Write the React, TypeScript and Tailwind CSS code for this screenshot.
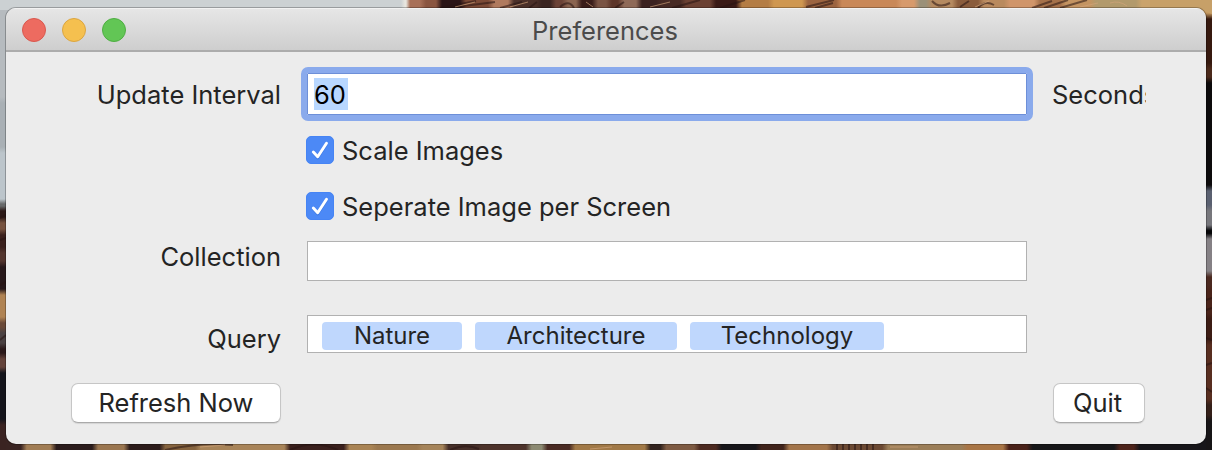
import React from "react";

type Band = [start: number, size: number, color: string];

const topBands: Band[] = [
  [0, 404, "#ccd1d3"], [404, 3, "#e8e6df"], [407, 16, "#a87058"], [423, 16, "#8a5540"],
  [439, 24, "#2a1517"], [463, 28, "#7c4a36"], [491, 20, "#b07a5e"], [511, 28, "#4b3029"],
  [539, 14, "#3a2420"], [553, 12, "#6b4236"], [565, 14, "#8a6450"], [579, 16, "#3a1d1a"],
  [595, 14, "#7a5444"], [609, 12, "#5d3529"], [621, 18, "#8f6a58"], [639, 20, "#3b2220"],
  [659, 24, "#472a24"], [683, 30, "#6b4133"], [713, 26, "#3a1a16"], [739, 32, "#b47d45"],
  [771, 34, "#cf9750"], [805, 34, "#9c6440"], [839, 60, "#c98858"], [899, 18, "#d79a6c"],
  [917, 12, "#9a9078"], [929, 26, "#b58a60"], [955, 26, "#8a5c3c"], [981, 26, "#b98a5e"],
  [1007, 30, "#d0956a"], [1037, 26, "#a5714a"], [1063, 30, "#c49462"], [1093, 46, "#b29a6c"],
  [1139, 73, "#caa36c"],
];

const bottomBands: Band[] = [
  [0, 18, "#3a2422"], [18, 30, "#a07c54"], [48, 42, "#2b1c1c"], [90, 32, "#9a7650"],
  [122, 36, "#2c1c1b"], [158, 36, "#86643f"], [194, 90, "#a88459"], [284, 60, "#3a201d"],
  [344, 28, "#a98455"], [372, 46, "#9b784f"], [418, 26, "#a5845a"], [444, 34, "#47302a"],
  [478, 50, "#4d332b"], [528, 16, "#8c8a72"], [544, 28, "#4a2b24"], [572, 76, "#a17947"],
  [648, 16, "#33241f"], [664, 34, "#7d5a42"], [698, 22, "#4c2a20"], [720, 40, "#17161a"],
  [760, 28, "#40231b"], [788, 44, "#a2744a"], [832, 56, "#6b4933"], [888, 80, "#9b7e58"],
  [968, 42, "#a87546"], [1010, 24, "#4a221a"], [1034, 88, "#171719"], [1122, 20, "#4d241b"],
  [1142, 70, "#17161a"],
];

const leftBands: Band[] = [
  [0, 100, "#b6bbbf"], [100, 50, "#a9b0b5"], [150, 52, "#bcc5cb"], [202, 6, "#67696a"],
  [208, 12, "#2b1917"], [220, 12, "#76523f"], [232, 18, "#3b211d"], [250, 14, "#53352e"],
  [264, 28, "#27181a"], [292, 28, "#b08353"], [320, 10, "#6a4938"], [330, 16, "#4a4142"],
  [346, 10, "#2b191a"], [356, 14, "#64433a"], [370, 52, "#14141b"], [422, 28, "#3a2321"],
];

const rightBands: Band[] = [
  [0, 16, "#c69a60"], [16, 50, "#36190f"], [66, 14, "#4b2a1b"], [80, 108, "#0d0b0c"],
  [188, 20, "#5a6070"], [208, 20, "#77777c"], [228, 8, "#060608"], [236, 38, "#858185"],
  [274, 14, "#4b2920"], [288, 28, "#4a241a"], [316, 26, "#3c1c14"], [342, 60, "#582e20"],
  [402, 16, "#342019"], [418, 32, "#171517"],
];

const streaks = [
  "M440 8L476 1M448 8L495 2M500 8L522 2M529 8l8-6M560 7q9-8 14 1M615 8l9-6M672 8l28-8M720 8l25-8",
  "M806 7l28-7M815 8l18-5M932 1q7 8 18 2M960 7l9-6M978 8q7-8 16-3M1032 8l20-7M1044 8l24-8M1060 8l27-8",
  "M165 450q35-8 68-5M290 450q24-11 48 0M450 450q15-7 29-1M0 218l6-3M0 240l6-2M0 285l6-3M0 340l6-5",
  "M837 444v6M843 444v6M849 444v6M855 444v6M861 444v6M867 444v6M873 444v6M1206 300l6-2M1206 310l6-2M1206 338l6 2M1206 365l6-2M1206 388l6 4",
];

function Stops({ bands, length }: { bands: Band[]; length: number }) {
  return (
    <>
      {bands.flatMap(([start, size, color]) => {
        const edge = Math.min(3, size / 3);
        return [
          <stop key={start + "a"} offset={(start + edge) / length} stopColor={color} />,
          <stop key={start + "b"} offset={(start + size - edge) / length} stopColor={color} />,
        ];
      })}
    </>
  );
}

function Wallpaper() {
  return (
    <svg className="absolute inset-0" width="1212" height="450" viewBox="0 0 1212 450" aria-hidden="true">
      <defs>
        <linearGradient id="top"><Stops bands={topBands} length={1212} /></linearGradient>
        <linearGradient id="bottom"><Stops bands={bottomBands} length={1212} /></linearGradient>
        <linearGradient id="left" x2="0" y2="1"><Stops bands={leftBands} length={450} /></linearGradient>
        <linearGradient id="right" x2="0" y2="1"><Stops bands={rightBands} length={450} /></linearGradient>
      </defs>
      <rect width="20" height="450" fill="url(#left)" />
      <rect x="1196" width="16" height="450" fill="url(#right)" />
      <rect width="1212" height="10" fill="url(#top)" />
      <path d="M1150 0h62v14l-15-6h-47z" fill="#c7a068" />
      <rect y="438" x="6" width="1200" height="12" fill="url(#bottom)" />
      {streaks.map((d) => <path key={d} d={d} fill="none" stroke="#281413" strokeWidth="2" opacity=".55" />)}
      <path d="M455 7l20-5M510 7l18-5M586 2l7 5M650 7l20-5M975 7l14-6M1080 7l18-4M1110 3q9-3 17 3M200 447l25-2M590 449l22-2M890 447h28" fill="none" stroke="#d2a57b" opacity=".65" />
    </svg>
  );
}

function Checkbox({ label }: { label: string }) {
  return (
    <label className="flex h-7 items-center gap-2">
      <span className="flex size-7 shrink-0 items-center justify-center rounded-[5px] border border-[#4684f4] bg-[#4c89f6]">
        <svg width="28" height="28" viewBox="0 0 28 28" className="shrink-0" fill="none" strokeLinecap="round" strokeLinejoin="round" aria-hidden="true">
          <path d="M7.3 17.2l4.4 4.8L20.5 8.5" stroke="#326dd2" strokeWidth="2.6" opacity=".5" />
          <path d="M7.3 16l4.4 4.8L20.5 7.3" stroke="white" strokeWidth="2.9" />
        </svg>
      </span>
      <span className="pt-0.5">{label}</span>
    </label>
  );
}

function Token({ label, size }: { label: string; size: string }) {
  return (
    <span className={"flex h-7 items-center justify-center rounded-[4px] bg-[#bfd7fd] text-[24px] leading-7 " + size}>
      {label}
    </span>
  );
}

const lights = ["border-[#d9584e] bg-[#ed6b60]", "border-[#dba540] bg-[#f5c04f]", "border-[#4fae43] bg-[#62c655]"];

export default function App() {
  return (
    <div className="relative h-[450px] w-[1212px] overflow-hidden font-['Inter',sans-serif] text-[25.5px] leading-8 whitespace-nowrap text-[#242424]">
      <Wallpaper />
      <main className="relative mt-2 ml-1.5 h-[436px] w-[1200px] overflow-hidden rounded-[10px] bg-[#ececec] shadow-[0_0_0_1px_rgba(0,0,0,0.25)]">
        <header className="grid h-11 grid-cols-[1fr_auto_1fr] items-center border-t border-b-2 border-t-[#f2f2f2] border-b-[#acacac] bg-linear-to-b from-[#e6e6e6] to-[#cecece] pl-4">
          <div className="flex gap-4">
            {lights.map((c) => <span key={c} className={"size-6 rounded-full border " + c} />)}
          </div>
          <h1 className="-ml-[18px] pt-0.5 text-[#4b4b4b]">Preferences</h1>
        </header>

        <div className="flex items-center pt-[21px]">
          <span className="w-[275px] pt-0.5 text-right">Update Interval</span>
          <div className="ml-[26px] flex h-[42px] w-[720px] items-center rounded-[1px] border border-[#6d8fd8] bg-white pl-1.5 outline-6 outline-[#8aaaec]">
            <span className="flex h-8 w-[34px] items-center bg-[#b8d7ff] pt-0.5 text-black">60</span>
          </div>
          <span className="ml-[25px] w-[94px] overflow-hidden pt-0.5">Seconds</span>
        </div>

        <div className="ml-[300px] flex flex-col gap-7 pt-[21px]">
          <Checkbox label="Scale Images" />
          <Checkbox label="Seperate Image per Screen" />
        </div>

        <div className="mt-[21px] flex items-start">
          <span className="w-[275px] text-right">Collection</span>
          <div className="ml-[26px] h-10 w-[720px] border border-[#b1b1b1] bg-white" />
        </div>

        <div className="mt-[34px] flex h-[38px] items-center">
          <span className="w-[275px] pt-[10px] text-right">Query</span>
          <div className="ml-[26px] flex h-[38px] w-[720px] items-start gap-[13px] border border-[#b1b1b1] bg-white pt-[6px] pl-[14px]">
            <Token label="Nature" size="w-[140px]" />
            <Token label="Architecture" size="w-[202px]" />
            <Token label="Technology" size="w-[194px]" />
          </div>
        </div>

        <div className="mt-[30px] flex justify-between pr-[61px] pl-[65px]">
          <button className="h-10 w-[210px] rounded-[7px] border border-[#c6c6c6] border-b-[#aaaaaa] bg-white shadow-[0_1px_1px_rgba(0,0,0,0.1)]">Refresh Now</button>
          <button className="h-10 w-[92px] rounded-[7px] border border-[#c6c6c6] border-b-[#aaaaaa] bg-white pr-[3px] shadow-[0_1px_1px_rgba(0,0,0,0.1)]">Quit</button>
        </div>
      </main>
    </div>
  );
}
